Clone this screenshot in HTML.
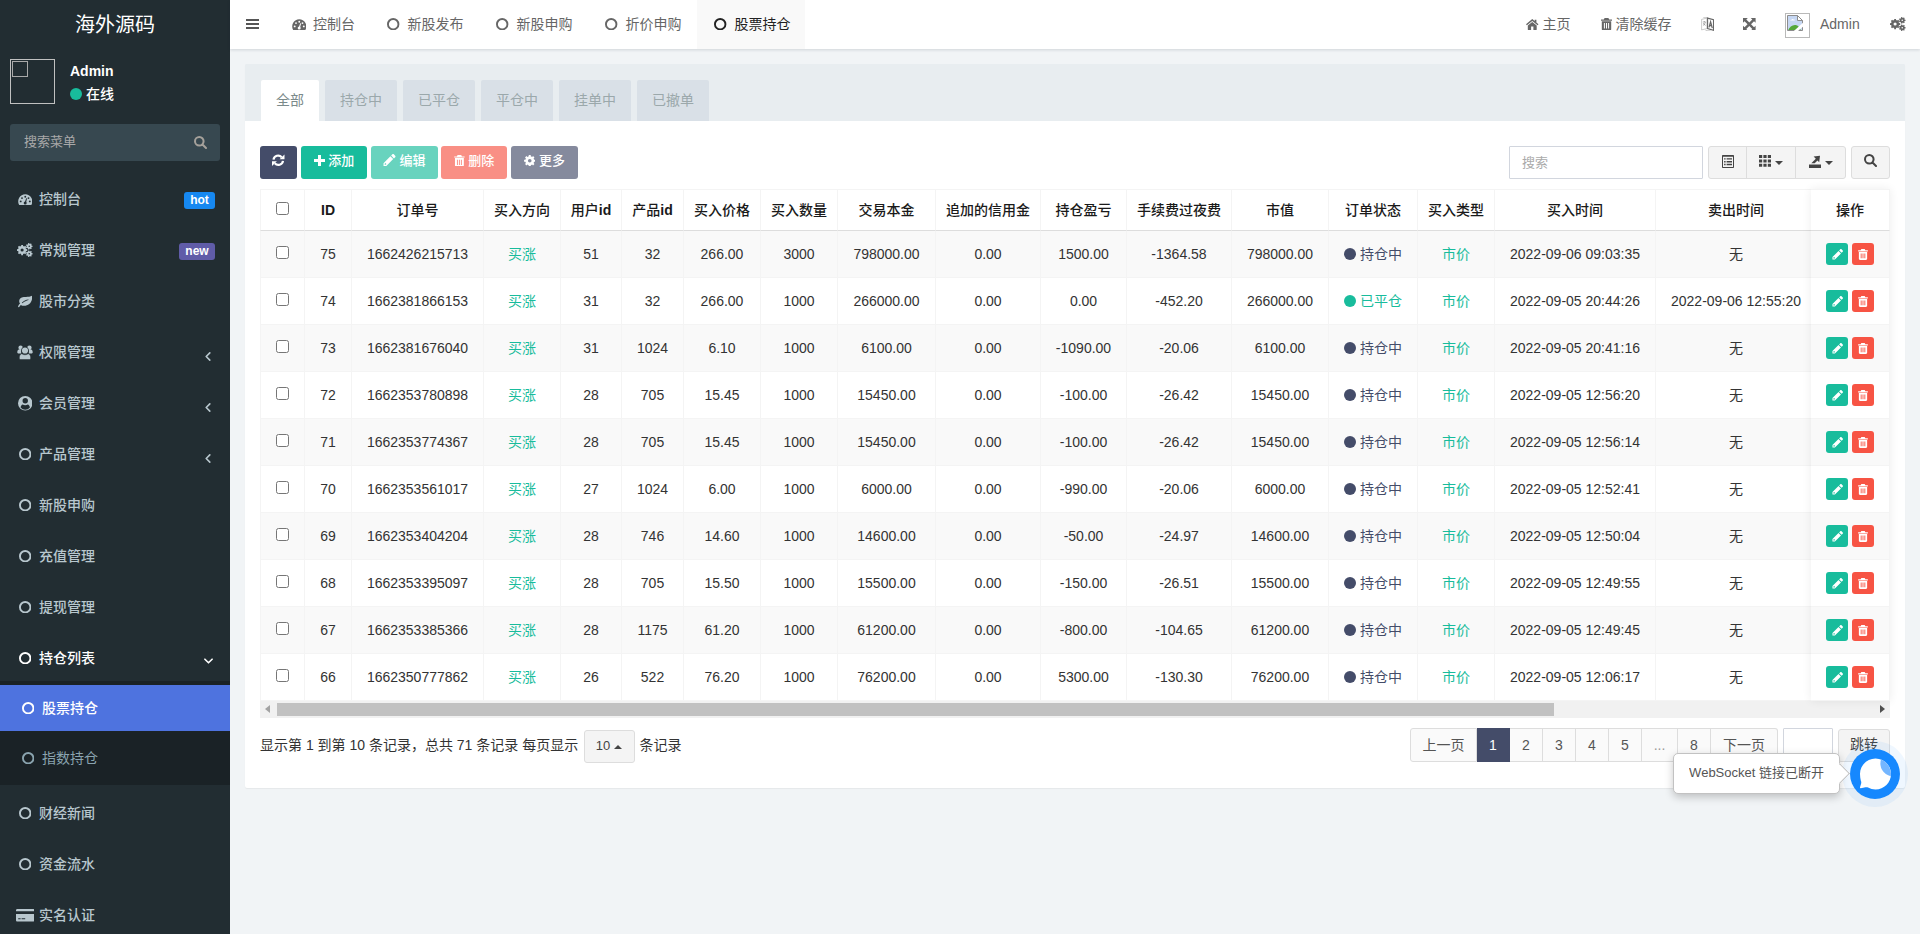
<!DOCTYPE html>
<html lang="zh-CN">
<head>
<meta charset="utf-8">
<title>海外源码</title>
<style>
*{box-sizing:border-box}
html,body{margin:0;padding:0}
html{width:1920px;height:934px;overflow:hidden;background:#f1f4f6}
body{position:relative;width:1920px;height:934px;overflow:hidden;background:#f1f4f6;color:#333;
  font-family:"Liberation Sans","Noto Sans CJK SC",sans-serif;font-size:14px;line-height:20px}
ul{list-style:none;margin:0;padding:0}
a{text-decoration:none;color:inherit}
p{margin:0}
.ic{display:inline-block;vertical-align:middle;flex:none}

/* ---------- sidebar ---------- */
.main-sidebar{position:absolute;left:0;top:0;width:230px;height:934px;background:#222d32;color:#b8c7ce;overflow:hidden}
.logo{position:absolute;left:0;top:0;width:230px;height:50px;line-height:50px;text-align:center;font-size:20px;color:#fff}
.user-panel{position:absolute;left:0;top:49px;width:230px;height:65px}
.user-panel .avatar{position:absolute;left:10px;top:10px;width:45px;height:45px;border:1px solid #c0c0c0}
.user-panel .avatar .broken{position:absolute;left:1px;top:1px;width:16px;height:16px;border:1px solid #a9a9a9}
.user-panel .info{position:absolute;left:70px;top:12px;color:#fff}
.user-panel .info p{font-weight:700;font-size:14px;line-height:20px;height:20px}
.user-panel .status{display:block;position:absolute;left:0;top:23px;font-weight:500;font-size:14px;line-height:20px;white-space:nowrap;padding-left:16px}
.user-panel .dot{position:absolute;left:0;top:4px;width:12px;height:12px;border-radius:50%;background:#18bc9c}
.sidebar-form{position:absolute;left:10px;top:124px;width:210px;height:37px;border-radius:3px;background:#374850;color:#a5abae}
.sidebar-form .ph{position:absolute;left:14px;top:0;line-height:36px;font-size:13px;color:#a9a9a9}
.sidebar-form .sbtn{position:absolute;left:183.5px;top:-1px;width:14px;height:37px;line-height:36px;color:#a5a19b}
.sidebar-menu{position:absolute;left:0;top:176px;width:230px}
.sidebar-menu>li{margin-bottom:5px}
.sidebar-menu li>a{display:block;position:relative;height:46px;line-height:46px;padding-left:15px;white-space:nowrap}
.sidebar-menu .mi{display:inline-block;width:20px;height:46px;text-align:center;vertical-align:top;line-height:44px}
.sidebar-menu .mt{display:inline-block;margin-left:4px;vertical-align:top;font-weight:500}
.sidebar-menu .label{position:absolute;right:15px;top:16px;height:17px;line-height:17px;font-size:12px;font-weight:700;color:#fff;border-radius:3px;padding:0 5px;text-align:center}
.sidebar-menu .lb-hot{background:#1688f1;width:31px;padding:0}
.sidebar-menu .lb-new{background:#605ca8;width:36px;padding:0}
.sidebar-menu .arrow{position:absolute;right:18px;top:0;height:46px;line-height:52px;width:8px;text-align:center}
.sidebar-menu .arrow.down{right:17px;width:9px;line-height:51px}
.sidebar-menu a.act{color:#fff}
.treeview-menu{background:#1a2226;padding:4px 0}
.treeview-menu>li{margin:0 0 4px}
.treeview-menu>li:last-child{margin-bottom:0}
.treeview-menu>li>a{padding-left:18px !important;color:#8aa4af}
.treeview-menu>li>a .mt{font-weight:400}
.treeview-menu>li.active>a .mt{font-weight:500}
.treeview-menu>li.active>a{background:#4e73df;color:#fff}

/* ---------- header ---------- */
.main-header{position:absolute;left:230px;top:0;width:1690px;height:49px;background:#fff;box-shadow:0 1px 3px rgba(0,21,41,.14);color:#666}
.sidebar-toggle{position:absolute;left:16px;top:19px;width:13px;height:10px;line-height:0;color:#555}
.nav-addtabs{position:absolute;left:45px;top:0;height:49px;display:flex}
.nav-addtabs li{height:49px;line-height:48px;white-space:nowrap}
.nav-addtabs li a{display:block;padding-left:14.5px;color:#666}
.nav-addtabs li:first-child a{padding-left:15px}
.nav-addtabs li.active{background:#f9f9f9}
.nav-addtabs li.active a{color:#222}
.nav-addtabs .ti{display:inline-block;width:18px;text-align:center;margin-right:5px;vertical-align:top;line-height:46px}
.nav-right li{position:absolute;top:0;height:49px;line-height:48px;white-space:nowrap;margin-left:-230px}
.nav-right li a{display:flex;align-items:center;height:48px;color:#666}
.nav-right .uimg{display:inline-block;width:25px;height:25px;border:1px solid #b9b9b9;line-height:0;padding:1px 0 0 1px;position:relative;top:1px}
.nav-right .uimg .ic{vertical-align:top}

/* ---------- content ---------- */
.content{position:absolute;left:230px;top:49px;width:1690px;height:885px}
.panel{position:absolute;left:15px;top:15px;width:1660px;height:724px;background:#fff;border-radius:2px;box-shadow:0 1px 1px rgba(0,0,0,.05)}
.panel-heading{position:absolute;left:0;top:0;width:1660px;height:57px;background:#e8edf0;border-radius:1px 1px 0 0;padding:15px 15px 0}
.nav-tabs{display:flex}
.nav-tabs li{margin-right:4px}
.nav-tabs li a{display:block;height:42px;line-height:40px;padding:0 15px;border:1px solid transparent;border-bottom:0;border-radius:3px 3px 0 0;background-color:#d9e0e7;color:#9ba8ab;background-clip:padding-box}
.nav-tabs li.active a{background-color:#fff;color:#7b8a8b}
.panel-body{position:absolute;left:0;top:57px;width:1660px;height:667px}
.btn{display:inline-flex;align-items:center;justify-content:center;height:33px;padding-bottom:4px;font-weight:500;border-radius:3px;font-size:13px;line-height:19px;color:#fff;vertical-align:top;white-space:nowrap;border:1px solid transparent}
.btn-primary{background:#444c69}
.btn-success{background:#18bc9c}
.btn-danger{background:#f75444}
.btn.disabled{opacity:.65}
.btn-default{background:#f4f4f4;border-color:#ddd;color:#444;font-weight:400;padding-bottom:3px}
.btn span{white-space:pre}
.toolbar{position:absolute;left:15px;top:25px;height:33px;display:flex}
.tools-right{position:absolute;left:0;top:25px;width:1660px;height:33px}
.tools-right .search{position:absolute;left:1264px;top:0;width:194px;height:33px;border:1px solid #d2d6de;background:#fff;border-radius:1px}
.tools-right .search .ph{position:absolute;left:12px;top:0;line-height:31px;font-size:13px;color:#aaa}
.tools-right .btn-group{position:absolute;left:1463px;top:0;display:flex}
.tools-right .btn-group .btn{border-radius:0;margin-left:-1px}
.tools-right .btn-group .btn:first-child{border-radius:3px 0 0 3px;margin-left:0}
.tools-right .btn-group .btn:last-child{border-radius:0 3px 3px 0}
.tools-right .sbtn2{position:absolute;left:1606px;top:0;padding-bottom:5px}
.caret{display:inline-block;margin-left:4px;line-height:0;font-style:normal;position:relative;top:2px}
.caret .ic{vertical-align:top}

/* table */
.tbl-wrap{position:absolute;left:15px;top:68px;width:1630px;height:529px;overflow:hidden}
.tbl{border-collapse:separate;border-spacing:0;table-layout:fixed;width:1556px;font-size:14px}
.tbl th,.tbl td{height:47px;padding:0;text-align:center;vertical-align:middle;white-space:nowrap;border-left:1px solid #f4f4f4;border-bottom:1px solid #f4f4f4;overflow:hidden}
.tbl th{height:42px;font-weight:500;color:#1a1a1a;border-top:1px solid #f4f4f4;border-bottom:1px solid #ddd;background:#fff}
.tbl tbody tr:nth-child(odd) td{background:#f9f9f9}
.tbl tbody tr:nth-child(even) td{background:#fff}
.tbl .g{color:#18bc9c}
.tbl .st{color:#444c69}
.tbl .st i{display:inline-block;width:12px;height:12px;border-radius:50%;background:#444c69;margin-right:4px;vertical-align:-1px}
.tbl .st-ok{color:#18bc9c}
.tbl .st-ok i{background:#18bc9c}
.cb{display:inline-block;width:13px;height:13px;border:1px solid #767676;border-radius:2.5px;background:#fff;vertical-align:middle;position:relative;top:-3px}
.fixed-col{position:absolute;left:1566px;top:68px;width:79px;height:512px;background:#fff;box-shadow:0 0 9px rgba(0,0,0,.075)}
.fixed-col .tbl{width:79px}
.fixed-col .tbl th,.fixed-col .tbl td{border-left:0;border-right:1px solid #f4f4f4}
.ab{display:inline-flex;align-items:center;justify-content:center;width:22px;height:22px;border-radius:3px;color:#fff;vertical-align:middle;margin:0 2px}
.ab-e{background:#18bc9c}
.ab-d{background:#f75444}
.hscroll{position:absolute;left:0;top:512px;width:1630px;height:17px;background:#f1f1f1}
.hscroll .thumb{position:absolute;left:17px;top:2px;width:1277px;height:13px;background:#c1c1c1}
.hscroll .al{position:absolute;left:5px;top:4px;width:0;height:0;border:4.500px solid transparent;border-left:0;border-right:5px solid #a3a3a3}
.hscroll .ar{position:absolute;left:1620px;top:4px;width:0;height:0;border:4.500px solid transparent;border-right:0;border-left:5px solid #505050}

/* pagination */
.pg-left{position:absolute;left:15px;top:607px;height:34px;line-height:34px;white-space:nowrap;font-size:14px;color:#333}
.pg-left .psize{width:51px;margin:0 1px 0 1.5px;vertical-align:top;position:relative;top:2px}
.pg-right{position:absolute;left:0;top:607px;width:1660px;height:34px}
.pagination{position:absolute;left:1165px;top:0;display:flex;height:34px}
.pagination li{height:34px;margin-left:0}
.pagination li a{display:block;height:34px;line-height:32px;text-align:center;border:1px solid #ddd;border-left-width:0;background:#fafafa;color:#555;font-size:14px}
.pagination li:first-child a{border-left-width:1px;border-radius:3px 0 0 3px}
.pagination li:last-child a{border-radius:0 3px 3px 0}
.pagination li.active a{background:#444c69;border-color:#444c69;color:#fff}
.jump-in{position:absolute;left:1538px;top:0;width:50px;height:34px;border:1px solid #d2d6de;background:#fff;border-radius:1px}
.jump-btn{position:absolute;left:1593px;top:1px;width:52px;color:#444;font-size:14px}

/* chat */
.ws-tip{position:absolute;left:1673px;top:753px;width:167px;height:41px;background:#fff;border:1px solid #c2c2c2;border-radius:5px;box-shadow:0 3px 8px rgba(0,0,0,.22);font-size:12px;line-height:37px;color:#555;text-align:center;white-space:nowrap;z-index:7}
.ws-tip span{font-size:14px;display:inline-block;transform:scale(.93);transform-origin:50% 50%}
.ws-tip .tri{position:absolute;left:157.5px;top:11.5px;width:15px;height:15px;background:#fff;border:1px solid #b4b4b4;border-left-color:transparent;border-bottom-color:transparent;transform:rotate(45deg);clip-path:polygon(0 0,100% 0,100% 100%,calc(100% - 2.4px) 100%,0 2.4px)}
.chat-btn{position:absolute;left:1850px;top:749px;width:50px;height:50px;border-radius:50%;box-shadow:0 0 0 8px rgba(25,137,250,.07);z-index:6;line-height:0}
.tbl th b{font-weight:700}
.pagination li.dots a{color:#999}
</style>
</head>
<body>
<aside class="main-sidebar">
<a class="logo">海外源码</a>
<div class="user-panel"><div class="avatar"><span class="broken"></span></div><div class="info"><p>Admin</p><span class="status"><i class="dot"></i>在线</span></div></div>
<div class="sidebar-form"><span class="ph">搜索菜单</span><span class="sbtn"><svg class="ic " width="13" height="13" viewBox="0 0 13 13" style="" aria-hidden="true"><path fill="none" stroke="currentColor" stroke-width="2" stroke-linecap="round" d="M9.600 5.300a4.300 4.300 0 1 1-8.600 0a4.300 4.300 0 0 1 8.600 0zM8.500 8.500L12 12"/></svg></span></div>
<ul class="sidebar-menu">
<li><a><span class="mi"><svg class="ic " width="14.5" height="11.5" viewBox="0 0 14.5 11.5" style="" aria-hidden="true"><path fill="currentColor" d="M7.250 .2a7.200 7.200 0 0 1 6.200 10.600a.9.900 0 0 1-.8.500H1.850a.9.900 0 0 1-.8-.5A7.200 7.200 0 0 1 7.250 .2z"/><g fill="#222d32"><circle cx="2.700" cy="7.400" r=".95"/><circle cx="4" cy="4.100" r=".95"/><circle cx="7.250" cy="2.700" r=".95"/><circle cx="10.500" cy="4.100" r=".95"/><circle cx="11.800" cy="7.400" r=".95"/><circle cx="7.200" cy="8.900" r="1.500"/><path d="M8.200 4.300l.9.300-1.100 4.200l-1.300-.4z"/></g></svg></span><span class="mt">控制台</span><small class="label lb-hot">hot</small></a></li>
<li><a><span class="mi"><svg class="ic " width="15.7" height="14.2" viewBox="0 0 16 14.5" style="" aria-hidden="true"><path fill="currentColor" fill-rule="evenodd" d="M10.42 6.29L10.42 8.11L9.28 8.18L8.78 9.39L9.54 10.25L8.25 11.54L7.39 10.78L6.18 11.28L6.11 12.42L4.29 12.42L4.22 11.28L3.01 10.78L2.15 11.54L0.86 10.25L1.62 9.39L1.12 8.18L-0.02 8.11L-0.02 6.29L1.12 6.22L1.62 5.01L0.86 4.15L2.15 2.86L3.01 3.62L4.22 3.12L4.29 1.98L6.11 1.98L6.18 3.12L7.39 3.62L8.25 2.86L9.54 4.15L8.78 5.01L9.28 6.22ZM3.60 7.20a1.60 1.60 0 1 0 3.20 0a1.60 1.60 0 1 0 -3.20 0ZM15.83 2.73L15.83 4.07L15.01 4.09L14.60 4.93L15.10 5.59L14.06 6.42L13.52 5.79L12.62 6.00L12.41 6.80L11.11 6.50L11.27 5.69L10.54 5.11L9.79 5.45L9.21 4.25L9.94 3.86L9.94 2.94L9.21 2.55L9.79 1.35L10.54 1.69L11.27 1.11L11.11 0.30L12.41 0.00L12.62 0.80L13.52 1.01L14.06 0.38L15.10 1.21L14.60 1.87L15.01 2.71ZM11.70 3.40a0.80 0.80 0 1 0 1.60 0a0.80 0.80 0 1 0 -1.60 0ZM15.83 10.33L15.83 11.67L15.01 11.69L14.60 12.53L15.10 13.19L14.06 14.02L13.52 13.39L12.62 13.60L12.41 14.40L11.11 14.10L11.27 13.29L10.54 12.71L9.79 13.05L9.21 11.85L9.94 11.46L9.94 10.54L9.21 10.15L9.79 8.95L10.54 9.29L11.27 8.71L11.11 7.90L12.41 7.60L12.62 8.40L13.52 8.61L14.06 7.98L15.10 8.81L14.60 9.47L15.01 10.31ZM11.70 11.00a0.80 0.80 0 1 0 1.60 0a0.80 0.80 0 1 0 -1.60 0Z"/></svg></span><span class="mt">常规管理</span><small class="label lb-new">new</small></a></li>
<li><a><span class="mi"><svg class="ic " width="14.5" height="12.5" viewBox="0 0 14.5 12.5" style="" aria-hidden="true"><path fill="currentColor" fill-rule="evenodd" d="M14.300 .6c.2 6.600-3.100 10.200-8.200 10.200c-1.300 0-2.400-.3-3.300-.9C2.200 10.600 1.700 11.400 1.200 12C.8 12.500-.2 12 .1 11.300C.5 10.400 1.200 9.400 2 8.600C1.300 7.600 1 6.400 1.300 5.200C2 2.300 5 1.900 8 1.900c2.500 0 4.700-.2 6.300-1.300zM10.400 4.500C8 4.700 5.600 5.800 3.800 7.700L4.400 8.300c2.100-1.600 4-2.600 6.200-3.200z"/></svg></span><span class="mt">股市分类</span></a></li>
<li><a><span class="mi"><svg class="ic " width="16" height="15" viewBox="0 0 16 15" style="" aria-hidden="true"><g fill="currentColor"><circle cx="3.6" cy="2.700" r="2.200"/><circle cx="12.400" cy="2.700" r="2.200"/><path d="M.3 7.300C.3 5.600 1 4.600 2 4.500h2.200v4H1.200C.6 8.500.3 8 .3 7.300zM15.700 7.300c0-1.700-.7-2.700-1.700-2.800h-2.200v4h3c.6 0 .9-.5.9-1.200z"/><circle cx="8" cy="5.500" r="3.700" fill="#222d32"/><circle cx="8" cy="5.500" r="3.100"/><path stroke="#222d32" stroke-width=".5" d="M4 14.600c-1.100 0-1.700-.7-1.700-1.700c0-2.200 1-4 2.500-4.200c.9.700 2 1.100 3.200 1.100s2.300-.4 3.200-1.100c1.500.2 2.500 2 2.500 4.200c0 1-.6 1.700-1.700 1.700z"/></g></svg></span><span class="mt">权限管理</span><span class="arrow"><svg class="ic " width="6" height="9" viewBox="0 0 6 9" style="" aria-hidden="true"><path fill="none" stroke="currentColor" stroke-width="1.6" stroke-linecap="round" stroke-linejoin="round" d="M4.800 .9L1.200 4.500L4.800 8.100"/></svg></span></a></li>
<li><a><span class="mi"><svg class="ic " width="14.5" height="14.5" viewBox="0 0 14.5 14.5" style="" aria-hidden="true"><path fill="currentColor" fill-rule="evenodd" d="M7.250 0a7.250 7.250 0 1 1 0 14.500a7.250 7.250 0 0 1 0-14.500zM7.250 2.100a2.700 2.700 0 1 0 0 5.400a2.700 2.700 0 0 0 0-5.400zM2.600 11.400a5.900 5.900 0 0 0 9.300 0c-.3-1.500-1-2.600-2.200-2.900c-.7.500-1.500.8-2.450.8s-1.750-.3-2.450-.8c-1.200.3-1.900 1.400-2.200 2.900z"/></svg></span><span class="mt">会员管理</span><span class="arrow"><svg class="ic " width="6" height="9" viewBox="0 0 6 9" style="" aria-hidden="true"><path fill="none" stroke="currentColor" stroke-width="1.6" stroke-linecap="round" stroke-linejoin="round" d="M4.800 .9L1.200 4.500L4.800 8.100"/></svg></span></a></li>
<li><a><span class="mi"><svg class="ic " width="12.4" height="12.4" viewBox="0 0 12.4 12.4" style="" aria-hidden="true"><circle cx="6.2" cy="6.2" r="5.25" fill="none" stroke="currentColor" stroke-width="1.9"/></svg></span><span class="mt">产品管理</span><span class="arrow"><svg class="ic " width="6" height="9" viewBox="0 0 6 9" style="" aria-hidden="true"><path fill="none" stroke="currentColor" stroke-width="1.6" stroke-linecap="round" stroke-linejoin="round" d="M4.800 .9L1.200 4.500L4.800 8.100"/></svg></span></a></li>
<li><a><span class="mi"><svg class="ic " width="12.4" height="12.4" viewBox="0 0 12.4 12.4" style="" aria-hidden="true"><circle cx="6.2" cy="6.2" r="5.25" fill="none" stroke="currentColor" stroke-width="1.9"/></svg></span><span class="mt">新股申购</span></a></li>
<li><a><span class="mi"><svg class="ic " width="12.4" height="12.4" viewBox="0 0 12.4 12.4" style="" aria-hidden="true"><circle cx="6.2" cy="6.2" r="5.25" fill="none" stroke="currentColor" stroke-width="1.9"/></svg></span><span class="mt">充值管理</span></a></li>
<li><a><span class="mi"><svg class="ic " width="12.4" height="12.4" viewBox="0 0 12.4 12.4" style="" aria-hidden="true"><circle cx="6.2" cy="6.2" r="5.25" fill="none" stroke="currentColor" stroke-width="1.9"/></svg></span><span class="mt">提现管理</span></a></li>
<li class="open"><a class="act"><span class="mi"><svg class="ic " width="12.4" height="12.4" viewBox="0 0 12.4 12.4" style="" aria-hidden="true"><circle cx="6.2" cy="6.2" r="5.25" fill="none" stroke="currentColor" stroke-width="1.9"/></svg></span><span class="mt">持仓列表</span><span class="arrow down"><svg class="ic " width="9" height="6" viewBox="0 0 9 6" style="" aria-hidden="true"><path fill="none" stroke="currentColor" stroke-width="1.6" stroke-linecap="round" stroke-linejoin="round" d="M.9 1.200L4.500 4.800L8.100 1.200"/></svg></span></a>
<ul class="treeview-menu"><li class="active"><a><span class="mi"><svg class="ic " width="12.4" height="12.4" viewBox="0 0 12.4 12.4" style="" aria-hidden="true"><circle cx="6.2" cy="6.2" r="5.25" fill="none" stroke="currentColor" stroke-width="1.9"/></svg></span><span class="mt">股票持仓</span></a></li><li><a><span class="mi"><svg class="ic " width="12.4" height="12.4" viewBox="0 0 12.4 12.4" style="" aria-hidden="true"><circle cx="6.2" cy="6.2" r="5.25" fill="none" stroke="currentColor" stroke-width="1.9"/></svg></span><span class="mt">指数持仓</span></a></li></ul></li>
<li><a><span class="mi"><svg class="ic " width="12.4" height="12.4" viewBox="0 0 12.4 12.4" style="" aria-hidden="true"><circle cx="6.2" cy="6.2" r="5.25" fill="none" stroke="currentColor" stroke-width="1.9"/></svg></span><span class="mt">财经新闻</span></a></li>
<li><a><span class="mi"><svg class="ic " width="12.4" height="12.4" viewBox="0 0 12.4 12.4" style="" aria-hidden="true"><circle cx="6.2" cy="6.2" r="5.25" fill="none" stroke="currentColor" stroke-width="1.9"/></svg></span><span class="mt">资金流水</span></a></li>
<li><a><span class="mi"><svg class="ic " width="18.5" height="12.5" viewBox="0 0 18.5 12.5" style="margin-left:-0.3px" aria-hidden="true"><path fill="currentColor" fill-rule="evenodd" d="M1.300 0h15.900c.7 0 1.300.6 1.300 1.300v1H0v-1C0 .6.600 0 1.300 0zM0 5h18.500v6.200c0 .7-.6 1.300-1.300 1.300H1.300C.6 12.500 0 11.900 0 11.200zM2.200 9.300v1h2.400v-1zM5.600 9.300v1h3.600v-1z"/></svg></span><span class="mt">实名认证</span></a></li>
</ul>
</aside>
<header class="main-header">
<a class="sidebar-toggle"><svg class="ic " width="13" height="10" viewBox="0 0 13 10" style="" aria-hidden="true"><path fill="currentColor" d="M0 0h13v2H0zM0 4h13v2H0zM0 8h13v2H0z"/></svg></a>
<ul class="nav-addtabs">
<li class="" style="width:95px"><a><span class="ti"><svg class="ic " width="14.5" height="11.5" viewBox="0 0 14.5 11.5" style="" aria-hidden="true"><path fill="currentColor" d="M7.250 .2a7.200 7.200 0 0 1 6.200 10.600a.9.900 0 0 1-.8.500H1.850a.9.900 0 0 1-.8-.5A7.200 7.200 0 0 1 7.250 .2z"/><g fill="#fff"><circle cx="2.700" cy="7.400" r=".95"/><circle cx="4" cy="4.100" r=".95"/><circle cx="7.250" cy="2.700" r=".95"/><circle cx="10.500" cy="4.100" r=".95"/><circle cx="11.800" cy="7.400" r=".95"/><circle cx="7.200" cy="8.900" r="1.500"/><path d="M8.200 4.300l.9.300-1.100 4.200l-1.300-.4z"/></g></svg></span><span>控制台</span></a></li>
<li class="" style="width:109px"><a><span class="ti"><svg class="ic " width="12.4" height="12.4" viewBox="0 0 12.4 12.4" style="" aria-hidden="true"><circle cx="6.2" cy="6.2" r="5.25" fill="none" stroke="currentColor" stroke-width="1.9"/></svg></span><span>新股发布</span></a></li>
<li class="" style="width:109px"><a><span class="ti"><svg class="ic " width="12.4" height="12.4" viewBox="0 0 12.4 12.4" style="" aria-hidden="true"><circle cx="6.2" cy="6.2" r="5.25" fill="none" stroke="currentColor" stroke-width="1.9"/></svg></span><span>新股申购</span></a></li>
<li class="" style="width:109px"><a><span class="ti"><svg class="ic " width="12.4" height="12.4" viewBox="0 0 12.4 12.4" style="" aria-hidden="true"><circle cx="6.2" cy="6.2" r="5.25" fill="none" stroke="currentColor" stroke-width="1.9"/></svg></span><span>折价申购</span></a></li>
<li class="active" style="width:108px"><a><span class="ti"><svg class="ic " width="12.4" height="12.4" viewBox="0 0 12.4 12.4" style="" aria-hidden="true"><circle cx="6.2" cy="6.2" r="5.25" fill="none" stroke="currentColor" stroke-width="1.9"/></svg></span><span>股票持仓</span></a></li>
</ul>
<ul class="nav-right">
<li style="left:1526px"><a><svg class="ic " width="12.5" height="11" viewBox="0 0 12.5 11" style="" aria-hidden="true"><path fill="currentColor" d="M6.250 0L0 5.200l.9 1.100L6.250 1.900l5.350 4.400l.9-1.100L10.400 3.400V.7H8.700v1.300zM6.250 2.900L1.800 6.600V10.400c0 .3.300.6.600.6H5.100V7.500h2.300V11h2.700c.3 0 .6-.3.600-.6V6.600z"/></svg><span class="t" style="margin-left:4px">主页</span></a></li>
<li style="left:1600.500px"><a><svg class="ic " width="11" height="12.5" viewBox="0 0 11 12.5" style="" aria-hidden="true"><path fill="currentColor" fill-rule="evenodd" d="M3.600 0h3.800l.8 1.500H11v1.200H0V1.500h2.800zM.8 3.300h9.400v7.900c0 .7-.6 1.300-1.300 1.300H2.100c-.7 0-1.300-.6-1.300-1.300zM2.900 5v5.600h1V5zM5 5v5.600h1V5zM7.100 5v5.600h1V5z"/></svg><span class="t" style="margin-left:4px">清除缓存</span></a></li>
<li style="left:1701px"><a><svg class="ic " width="13" height="14" viewBox="0 0 13 14" style="" aria-hidden="true"><path fill="none" stroke="currentColor" stroke-opacity=".38" stroke-width=".9" d="M.6 2.400L5.900 1.100v10.500L.6 12.900z"/><path fill="none" stroke="currentColor" stroke-opacity=".55" stroke-width=".9" d="M1.800 5h3M3.300 4v1M2 8.500c1.200-.6 2-1.700 2.300-3.400M2.300 6c.4 1.100 1.200 1.900 2.300 2.400"/><path fill="none" stroke="currentColor" stroke-width="1.100" d="M6.600 1.100l5.900 1.600v10.600l-5.900-1.700z"/><path fill="none" stroke="currentColor" stroke-width="1.200" d="M8 10.400l1.600-5.600l1.700 6.300M8.600 8.400l2.200.6"/><path fill="none" stroke="currentColor" stroke-opacity=".5" stroke-width=".8" d="M2.500 .5c1.500-.4 3-.4 4.500.3M9.500 13.700c-1.500.4-3.500.3-5-.5"/></svg></a></li>
<li style="left:1743px"><a><svg class="ic " width="12.6" height="12.6" viewBox="0 0 13 13" style="" aria-hidden="true"><path fill="currentColor" d="M0 0h5L3.400 1.600L6.500 4.700L9.600 1.600L8 0h5v5L11.400 3.400L8.300 6.500L11.400 9.600L13 8v5H8l1.600-1.600L6.500 8.300L3.400 11.400L5 13H0V8l1.600 1.600L4.700 6.500L1.600 3.400L0 5z"/></svg></a></li>
<li style="left:1785px"><a><span class="uimg"><svg class="ic " width="16" height="16" viewBox="0 0 16 16" style="" aria-hidden="true"><path fill="#c6d7f3" d="M.5 .5h10l5 5v10H.5z"/><path fill="#fff" d="M3 5.600c0-.7.900-.8 1.300-.5c.2-1.100 1.700-1.500 2.400-.5c.8-.2 1.300.4 1.100 1z" opacity=".95"/><path fill="#55a83a" d="M1 15.500c1.500-4 5-6.300 8.500-5.300c1.500.5 3 1.800 4.500 5.300z"/><path fill="none" stroke="#8c8c8c" stroke-width="1" d="M.5 .5h10l5 5v10H.5z"/><path fill="#fff" stroke="#8c8c8c" stroke-width="1" d="M10.500 .5v5h5z"/><path fill="#fff" d="M6.300 16.500L16.500 7.400v3.800L10.400 16.500z"/></svg></span><span class="t" style="margin-left:10px">Admin</span></a></li>
<li style="left:1890px"><a><svg class="ic " width="15.7" height="14.2" viewBox="0 0 16 14.5" style="" aria-hidden="true"><path fill="currentColor" fill-rule="evenodd" d="M10.42 6.29L10.42 8.11L9.28 8.18L8.78 9.39L9.54 10.25L8.25 11.54L7.39 10.78L6.18 11.28L6.11 12.42L4.29 12.42L4.22 11.28L3.01 10.78L2.15 11.54L0.86 10.25L1.62 9.39L1.12 8.18L-0.02 8.11L-0.02 6.29L1.12 6.22L1.62 5.01L0.86 4.15L2.15 2.86L3.01 3.62L4.22 3.12L4.29 1.98L6.11 1.98L6.18 3.12L7.39 3.62L8.25 2.86L9.54 4.15L8.78 5.01L9.28 6.22ZM3.60 7.20a1.60 1.60 0 1 0 3.20 0a1.60 1.60 0 1 0 -3.20 0ZM15.83 2.73L15.83 4.07L15.01 4.09L14.60 4.93L15.10 5.59L14.06 6.42L13.52 5.79L12.62 6.00L12.41 6.80L11.11 6.50L11.27 5.69L10.54 5.11L9.79 5.45L9.21 4.25L9.94 3.86L9.94 2.94L9.21 2.55L9.79 1.35L10.54 1.69L11.27 1.11L11.11 0.30L12.41 0.00L12.62 0.80L13.52 1.01L14.06 0.38L15.10 1.21L14.60 1.87L15.01 2.71ZM11.70 3.40a0.80 0.80 0 1 0 1.60 0a0.80 0.80 0 1 0 -1.60 0ZM15.83 10.33L15.83 11.67L15.01 11.69L14.60 12.53L15.10 13.19L14.06 14.02L13.52 13.39L12.62 13.60L12.41 14.40L11.11 14.10L11.27 13.29L10.54 12.71L9.79 13.05L9.21 11.85L9.94 11.46L9.94 10.54L9.21 10.15L9.79 8.95L10.54 9.29L11.27 8.71L11.11 7.90L12.41 7.60L12.62 8.40L13.52 8.61L14.06 7.98L15.10 8.81L14.60 9.47L15.01 10.31ZM11.70 11.00a0.80 0.80 0 1 0 1.60 0a0.80 0.80 0 1 0 -1.60 0Z"/></svg></a></li>
</ul>
</header>
<section class="content">
<div class="panel">
<div class="panel-heading"><ul class="nav-tabs"><li class="active"><a>全部</a></li><li class=""><a>持仓中</a></li><li class=""><a>已平仓</a></li><li class=""><a>平仓中</a></li><li class=""><a>挂单中</a></li><li class=""><a>已撤单</a></li></ul></div>
<div class="panel-body">
<div class="toolbar"><a class="btn btn-primary" style="width:37px"><svg class="ic " width="12.5" height="12.5" viewBox="0 0 12.5 12.5" style="" aria-hidden="true"><path fill="none" stroke="currentColor" stroke-width="2.200" d="M1.500 5.600A4.700 4.700 0 0 1 9.700 3.200M11 6.900A4.700 4.700 0 0 1 2.800 9.300"/><path fill="currentColor" d="M12.500 .4v4.900H7.600zM0 12.100V7.200h4.900z"/></svg></a><a class="btn btn-success" style="width:66px;margin-left:4px"><svg class="ic " width="11" height="11" viewBox="0 0 11 11" style="" aria-hidden="true"><path fill="currentColor" d="M4 0h3v4h4v3H7v4H4V7H0V4h4z"/></svg><span> 添加</span></a><a class="btn btn-success disabled" style="width:67px;margin-left:4px"><svg class="ic " width="12.5" height="12.5" viewBox="0 0 12 12" style="" aria-hidden="true"><path fill="currentColor" fill-rule="evenodd" d="M9 .3c.4-.4 1-.4 1.400 0l1.300 1.300c.4.4.4 1 0 1.400L10.500 4.200L7.800 1.500zM7.100 2.200l2.700 2.700L3.200 11.500H.5V8.800zM1.600 9.400v1h1l.7-.7L2.300 8.700z"/></svg><span> 编辑</span></a><a class="btn btn-danger disabled" style="width:66px;margin-left:3px"><svg class="ic " width="10.8" height="11.8" viewBox="0 0 11 12.5" style="" aria-hidden="true"><path fill="currentColor" fill-rule="evenodd" d="M3.600 0h3.800l.8 1.500H11v1.200H0V1.500h2.800zM.8 3.300h9.400v7.900c0 .7-.6 1.300-1.300 1.300H2.100c-.7 0-1.300-.6-1.300-1.300zM2.900 5v5.600h1V5zM5 5v5.600h1V5zM7.100 5v5.600h1V5z"/></svg><span> 删除</span></a><a class="btn btn-primary disabled" style="width:67px;margin-left:4px"><svg class="ic " width="11.5" height="11.5" viewBox="0 0 12 12" style="" aria-hidden="true"><path fill="currentColor" fill-rule="evenodd" d="M11.91 4.97L11.91 7.03L10.57 7.10L10.01 8.46L10.91 9.45L9.45 10.91L8.46 10.01L7.10 10.57L7.03 11.91L4.97 11.91L4.90 10.57L3.54 10.01L2.55 10.91L1.09 9.45L1.99 8.46L1.43 7.10L0.09 7.03L0.09 4.97L1.43 4.90L1.99 3.54L1.09 2.55L2.55 1.09L3.54 1.99L4.90 1.43L4.97 0.09L7.03 0.09L7.10 1.43L8.46 1.99L9.45 1.09L10.91 2.55L10.01 3.54L10.57 4.90ZM4.10 6.00a1.90 1.90 0 1 0 3.80 0a1.90 1.90 0 1 0 -3.80 0Z"/></svg><span> 更多</span></a></div>
<div class="tools-right"><div class="search"><span class="ph">搜索</span></div><div class="btn-group"><a class="btn btn-default" style="width:39px"><svg class="ic " width="12" height="13" viewBox="0 0 12 13" style="" aria-hidden="true"><path fill="currentColor" fill-rule="evenodd" d="M1 0h10c.6 0 1 .4 1 1v11c0 .6-.4 1-1 1H1c-.6 0-1-.4-1-1V1C0 .4.4 0 1 0zM1 1.800v10.200h10V1.800zM2.100 3.200h1.500v1.400H2.100zM4.600 3.200h5.400v1.400H4.600zM2.100 6h1.500v1.400H2.100zM4.600 6h5.400v1.400H4.600zM2.100 8.800h1.500v1.400H2.100zM4.600 8.800h5.400v1.400H4.600z"/></svg></a><a class="btn btn-default" style="width:50px"><svg class="ic " width="12" height="11.8" viewBox="0 0 12 11.8" style="" aria-hidden="true"><path fill="currentColor" d="M0.0 0.0h3.200v3h-3.200zM4.4 0.0h3.200v3h-3.200zM8.8 0.0h3.200v3h-3.200zM0.0 4.4h3.200v3h-3.200zM4.4 4.4h3.200v3h-3.200zM8.8 4.4h3.200v3h-3.200zM0.0 8.8h3.200v3h-3.200zM4.4 8.8h3.200v3h-3.200zM8.8 8.8h3.200v3h-3.200z"/></svg><i class="caret"><svg class="ic " width="8" height="4" viewBox="0 0 8 4" style="" aria-hidden="true"><path fill="currentColor" d="M0 0h8L4 4z"/></svg></i></a><a class="btn btn-default" style="width:51px"><svg class="ic " width="12" height="13" viewBox="0 0 12 13" style="" aria-hidden="true"><path fill="currentColor" d="M0 9.600h12v3.400H0zM2.300 8.300L6.800 3.800L4.600 1.600L11 .8L10.200 7.200L8.500 5.500L5.700 8.300z"/></svg><i class="caret"><svg class="ic " width="8" height="4" viewBox="0 0 8 4" style="" aria-hidden="true"><path fill="currentColor" d="M0 0h8L4 4z"/></svg></i></a></div><a class="btn btn-default sbtn2" style="width:39px"><svg class="ic " width="13" height="13" viewBox="0 0 13 13" style="" aria-hidden="true"><path fill="none" stroke="currentColor" stroke-width="2" stroke-linecap="round" d="M9.600 5.300a4.300 4.300 0 1 1-8.600 0a4.300 4.300 0 0 1 8.600 0zM8.500 8.500L12 12"/></svg></a></div>
<div class="tbl-wrap">
<table class="tbl">
<colgroup><col style="width:44px"><col style="width:47px"><col style="width:132px"><col style="width:77px"><col style="width:61px"><col style="width:62px"><col style="width:77px"><col style="width:77px"><col style="width:98px"><col style="width:105px"><col style="width:86px"><col style="width:105px"><col style="width:97px"><col style="width:89px"><col style="width:77px"><col style="width:161px"><col style="width:161px"></colgroup>
<thead><tr><th><span class="cb"></span></th><th><b>ID</b></th><th>订单号</th><th>买入方向</th><th>用户<b>id</b></th><th>产品<b>id</b></th><th>买入价格</th><th>买入数量</th><th>交易本金</th><th>追加的信用金</th><th>持仓盈亏</th><th>手续费过夜费</th><th>市值</th><th>订单状态</th><th>买入类型</th><th>买入时间</th><th>卖出时间</th></tr></thead>
<tbody>
<tr><td><span class="cb"></span></td><td>75</td><td>1662426215713</td><td><span class="g">买涨</span></td><td>51</td><td>32</td><td>266.00</td><td>3000</td><td>798000.00</td><td>0.00</td><td>1500.00</td><td>-1364.58</td><td>798000.00</td><td><span class="st"><i></i>持仓中</span></td><td><span class="g">市价</span></td><td>2022-09-06 09:03:35</td><td>无</td></tr>
<tr><td><span class="cb"></span></td><td>74</td><td>1662381866153</td><td><span class="g">买涨</span></td><td>31</td><td>32</td><td>266.00</td><td>1000</td><td>266000.00</td><td>0.00</td><td>0.00</td><td>-452.20</td><td>266000.00</td><td><span class="st st-ok"><i></i>已平仓</span></td><td><span class="g">市价</span></td><td>2022-09-05 20:44:26</td><td>2022-09-06 12:55:20</td></tr>
<tr><td><span class="cb"></span></td><td>73</td><td>1662381676040</td><td><span class="g">买涨</span></td><td>31</td><td>1024</td><td>6.10</td><td>1000</td><td>6100.00</td><td>0.00</td><td>-1090.00</td><td>-20.06</td><td>6100.00</td><td><span class="st"><i></i>持仓中</span></td><td><span class="g">市价</span></td><td>2022-09-05 20:41:16</td><td>无</td></tr>
<tr><td><span class="cb"></span></td><td>72</td><td>1662353780898</td><td><span class="g">买涨</span></td><td>28</td><td>705</td><td>15.45</td><td>1000</td><td>15450.00</td><td>0.00</td><td>-100.00</td><td>-26.42</td><td>15450.00</td><td><span class="st"><i></i>持仓中</span></td><td><span class="g">市价</span></td><td>2022-09-05 12:56:20</td><td>无</td></tr>
<tr><td><span class="cb"></span></td><td>71</td><td>1662353774367</td><td><span class="g">买涨</span></td><td>28</td><td>705</td><td>15.45</td><td>1000</td><td>15450.00</td><td>0.00</td><td>-100.00</td><td>-26.42</td><td>15450.00</td><td><span class="st"><i></i>持仓中</span></td><td><span class="g">市价</span></td><td>2022-09-05 12:56:14</td><td>无</td></tr>
<tr><td><span class="cb"></span></td><td>70</td><td>1662353561017</td><td><span class="g">买涨</span></td><td>27</td><td>1024</td><td>6.00</td><td>1000</td><td>6000.00</td><td>0.00</td><td>-990.00</td><td>-20.06</td><td>6000.00</td><td><span class="st"><i></i>持仓中</span></td><td><span class="g">市价</span></td><td>2022-09-05 12:52:41</td><td>无</td></tr>
<tr><td><span class="cb"></span></td><td>69</td><td>1662353404204</td><td><span class="g">买涨</span></td><td>28</td><td>746</td><td>14.60</td><td>1000</td><td>14600.00</td><td>0.00</td><td>-50.00</td><td>-24.97</td><td>14600.00</td><td><span class="st"><i></i>持仓中</span></td><td><span class="g">市价</span></td><td>2022-09-05 12:50:04</td><td>无</td></tr>
<tr><td><span class="cb"></span></td><td>68</td><td>1662353395097</td><td><span class="g">买涨</span></td><td>28</td><td>705</td><td>15.50</td><td>1000</td><td>15500.00</td><td>0.00</td><td>-150.00</td><td>-26.51</td><td>15500.00</td><td><span class="st"><i></i>持仓中</span></td><td><span class="g">市价</span></td><td>2022-09-05 12:49:55</td><td>无</td></tr>
<tr><td><span class="cb"></span></td><td>67</td><td>1662353385366</td><td><span class="g">买涨</span></td><td>28</td><td>1175</td><td>61.20</td><td>1000</td><td>61200.00</td><td>0.00</td><td>-800.00</td><td>-104.65</td><td>61200.00</td><td><span class="st"><i></i>持仓中</span></td><td><span class="g">市价</span></td><td>2022-09-05 12:49:45</td><td>无</td></tr>
<tr><td><span class="cb"></span></td><td>66</td><td>1662350777862</td><td><span class="g">买涨</span></td><td>26</td><td>522</td><td>76.20</td><td>1000</td><td>76200.00</td><td>0.00</td><td>5300.00</td><td>-130.30</td><td>76200.00</td><td><span class="st"><i></i>持仓中</span></td><td><span class="g">市价</span></td><td>2022-09-05 12:06:17</td><td>无</td></tr>
</tbody>
</table>
<div class="hscroll"><i class="al"></i><i class="thumb"></i><i class="ar"></i></div>
</div>
<div class="fixed-col"><table class="tbl"><thead><tr><th>操作</th></tr></thead><tbody><tr><td><a class="ab ab-e"><svg class="ic " width="11" height="11" viewBox="0 0 12 12" style="" aria-hidden="true"><path fill="currentColor" fill-rule="evenodd" d="M9 .3c.4-.4 1-.4 1.400 0l1.300 1.300c.4.4.4 1 0 1.400L10.500 4.200L7.800 1.500zM7.100 2.200l2.700 2.700L3.200 11.500H.5V8.800zM1.600 9.400v1h1l.7-.7L2.300 8.700z"/></svg></a><a class="ab ab-d"><svg class="ic " width="10" height="11" viewBox="0 0 11 12.5" style="" aria-hidden="true"><path fill="currentColor" fill-rule="evenodd" d="M3.600 0h3.800l.8 1.500H11v1.200H0V1.500h2.800zM.8 3.300h9.400v7.900c0 .7-.6 1.300-1.300 1.300H2.100c-.7 0-1.300-.6-1.300-1.300zM2.900 5v5.600h1V5zM5 5v5.600h1V5zM7.100 5v5.600h1V5z"/></svg></a></td></tr><tr><td><a class="ab ab-e"><svg class="ic " width="11" height="11" viewBox="0 0 12 12" style="" aria-hidden="true"><path fill="currentColor" fill-rule="evenodd" d="M9 .3c.4-.4 1-.4 1.400 0l1.300 1.300c.4.4.4 1 0 1.400L10.500 4.200L7.800 1.500zM7.100 2.200l2.700 2.700L3.200 11.500H.5V8.800zM1.600 9.400v1h1l.7-.7L2.300 8.700z"/></svg></a><a class="ab ab-d"><svg class="ic " width="10" height="11" viewBox="0 0 11 12.5" style="" aria-hidden="true"><path fill="currentColor" fill-rule="evenodd" d="M3.600 0h3.800l.8 1.500H11v1.200H0V1.500h2.800zM.8 3.300h9.400v7.900c0 .7-.6 1.300-1.300 1.300H2.100c-.7 0-1.300-.6-1.300-1.300zM2.900 5v5.600h1V5zM5 5v5.600h1V5zM7.100 5v5.600h1V5z"/></svg></a></td></tr><tr><td><a class="ab ab-e"><svg class="ic " width="11" height="11" viewBox="0 0 12 12" style="" aria-hidden="true"><path fill="currentColor" fill-rule="evenodd" d="M9 .3c.4-.4 1-.4 1.400 0l1.300 1.300c.4.4.4 1 0 1.400L10.500 4.200L7.800 1.500zM7.100 2.200l2.700 2.700L3.200 11.500H.5V8.800zM1.600 9.400v1h1l.7-.7L2.300 8.700z"/></svg></a><a class="ab ab-d"><svg class="ic " width="10" height="11" viewBox="0 0 11 12.5" style="" aria-hidden="true"><path fill="currentColor" fill-rule="evenodd" d="M3.600 0h3.800l.8 1.500H11v1.200H0V1.500h2.800zM.8 3.300h9.400v7.900c0 .7-.6 1.300-1.300 1.300H2.100c-.7 0-1.300-.6-1.300-1.300zM2.900 5v5.600h1V5zM5 5v5.600h1V5zM7.100 5v5.600h1V5z"/></svg></a></td></tr><tr><td><a class="ab ab-e"><svg class="ic " width="11" height="11" viewBox="0 0 12 12" style="" aria-hidden="true"><path fill="currentColor" fill-rule="evenodd" d="M9 .3c.4-.4 1-.4 1.400 0l1.300 1.300c.4.4.4 1 0 1.400L10.500 4.200L7.800 1.500zM7.100 2.200l2.700 2.700L3.200 11.500H.5V8.800zM1.600 9.400v1h1l.7-.7L2.300 8.700z"/></svg></a><a class="ab ab-d"><svg class="ic " width="10" height="11" viewBox="0 0 11 12.5" style="" aria-hidden="true"><path fill="currentColor" fill-rule="evenodd" d="M3.600 0h3.800l.8 1.500H11v1.200H0V1.500h2.800zM.8 3.300h9.400v7.900c0 .7-.6 1.300-1.300 1.300H2.100c-.7 0-1.300-.6-1.300-1.300zM2.900 5v5.600h1V5zM5 5v5.600h1V5zM7.100 5v5.600h1V5z"/></svg></a></td></tr><tr><td><a class="ab ab-e"><svg class="ic " width="11" height="11" viewBox="0 0 12 12" style="" aria-hidden="true"><path fill="currentColor" fill-rule="evenodd" d="M9 .3c.4-.4 1-.4 1.400 0l1.300 1.300c.4.4.4 1 0 1.400L10.500 4.200L7.800 1.500zM7.100 2.200l2.700 2.700L3.200 11.500H.5V8.800zM1.600 9.400v1h1l.7-.7L2.300 8.700z"/></svg></a><a class="ab ab-d"><svg class="ic " width="10" height="11" viewBox="0 0 11 12.5" style="" aria-hidden="true"><path fill="currentColor" fill-rule="evenodd" d="M3.600 0h3.800l.8 1.500H11v1.200H0V1.500h2.800zM.8 3.300h9.400v7.900c0 .7-.6 1.300-1.300 1.300H2.100c-.7 0-1.300-.6-1.300-1.300zM2.900 5v5.600h1V5zM5 5v5.600h1V5zM7.100 5v5.600h1V5z"/></svg></a></td></tr><tr><td><a class="ab ab-e"><svg class="ic " width="11" height="11" viewBox="0 0 12 12" style="" aria-hidden="true"><path fill="currentColor" fill-rule="evenodd" d="M9 .3c.4-.4 1-.4 1.400 0l1.300 1.300c.4.4.4 1 0 1.400L10.500 4.200L7.800 1.500zM7.100 2.200l2.700 2.700L3.200 11.500H.5V8.800zM1.600 9.400v1h1l.7-.7L2.300 8.700z"/></svg></a><a class="ab ab-d"><svg class="ic " width="10" height="11" viewBox="0 0 11 12.5" style="" aria-hidden="true"><path fill="currentColor" fill-rule="evenodd" d="M3.600 0h3.800l.8 1.500H11v1.200H0V1.500h2.800zM.8 3.300h9.400v7.900c0 .7-.6 1.300-1.300 1.300H2.100c-.7 0-1.300-.6-1.300-1.300zM2.900 5v5.600h1V5zM5 5v5.600h1V5zM7.100 5v5.600h1V5z"/></svg></a></td></tr><tr><td><a class="ab ab-e"><svg class="ic " width="11" height="11" viewBox="0 0 12 12" style="" aria-hidden="true"><path fill="currentColor" fill-rule="evenodd" d="M9 .3c.4-.4 1-.4 1.400 0l1.300 1.300c.4.4.4 1 0 1.400L10.500 4.200L7.800 1.500zM7.100 2.200l2.700 2.700L3.200 11.500H.5V8.800zM1.600 9.400v1h1l.7-.7L2.300 8.700z"/></svg></a><a class="ab ab-d"><svg class="ic " width="10" height="11" viewBox="0 0 11 12.5" style="" aria-hidden="true"><path fill="currentColor" fill-rule="evenodd" d="M3.600 0h3.800l.8 1.500H11v1.200H0V1.500h2.800zM.8 3.300h9.400v7.900c0 .7-.6 1.300-1.300 1.300H2.100c-.7 0-1.300-.6-1.300-1.300zM2.900 5v5.600h1V5zM5 5v5.600h1V5zM7.100 5v5.600h1V5z"/></svg></a></td></tr><tr><td><a class="ab ab-e"><svg class="ic " width="11" height="11" viewBox="0 0 12 12" style="" aria-hidden="true"><path fill="currentColor" fill-rule="evenodd" d="M9 .3c.4-.4 1-.4 1.400 0l1.300 1.300c.4.4.4 1 0 1.400L10.500 4.200L7.800 1.500zM7.100 2.200l2.700 2.700L3.200 11.500H.5V8.800zM1.600 9.400v1h1l.7-.7L2.300 8.700z"/></svg></a><a class="ab ab-d"><svg class="ic " width="10" height="11" viewBox="0 0 11 12.5" style="" aria-hidden="true"><path fill="currentColor" fill-rule="evenodd" d="M3.600 0h3.800l.8 1.500H11v1.200H0V1.500h2.800zM.8 3.300h9.400v7.900c0 .7-.6 1.300-1.300 1.300H2.100c-.7 0-1.300-.6-1.300-1.300zM2.900 5v5.600h1V5zM5 5v5.600h1V5zM7.100 5v5.600h1V5z"/></svg></a></td></tr><tr><td><a class="ab ab-e"><svg class="ic " width="11" height="11" viewBox="0 0 12 12" style="" aria-hidden="true"><path fill="currentColor" fill-rule="evenodd" d="M9 .3c.4-.4 1-.4 1.400 0l1.300 1.300c.4.4.4 1 0 1.400L10.500 4.200L7.800 1.500zM7.100 2.200l2.700 2.700L3.200 11.500H.5V8.800zM1.600 9.400v1h1l.7-.7L2.300 8.700z"/></svg></a><a class="ab ab-d"><svg class="ic " width="10" height="11" viewBox="0 0 11 12.5" style="" aria-hidden="true"><path fill="currentColor" fill-rule="evenodd" d="M3.600 0h3.800l.8 1.500H11v1.200H0V1.500h2.800zM.8 3.300h9.400v7.900c0 .7-.6 1.300-1.300 1.300H2.100c-.7 0-1.300-.6-1.300-1.300zM2.900 5v5.600h1V5zM5 5v5.600h1V5zM7.100 5v5.600h1V5z"/></svg></a></td></tr><tr><td><a class="ab ab-e"><svg class="ic " width="11" height="11" viewBox="0 0 12 12" style="" aria-hidden="true"><path fill="currentColor" fill-rule="evenodd" d="M9 .3c.4-.4 1-.4 1.400 0l1.300 1.300c.4.4.4 1 0 1.400L10.500 4.200L7.800 1.500zM7.100 2.200l2.700 2.700L3.200 11.500H.5V8.800zM1.600 9.400v1h1l.7-.7L2.300 8.700z"/></svg></a><a class="ab ab-d"><svg class="ic " width="10" height="11" viewBox="0 0 11 12.5" style="" aria-hidden="true"><path fill="currentColor" fill-rule="evenodd" d="M3.600 0h3.800l.8 1.500H11v1.200H0V1.500h2.800zM.8 3.300h9.400v7.900c0 .7-.6 1.300-1.300 1.300H2.100c-.7 0-1.300-.6-1.300-1.300zM2.900 5v5.600h1V5zM5 5v5.600h1V5zM7.100 5v5.600h1V5z"/></svg></a></td></tr></tbody></table></div>
<div class="pg-left"><span class="pinfo">显示第 1 到第 10 条记录，总共 71 条记录</span> <span class="plist">每页显示 <a class="btn btn-default psize"><span>10</span><i class="caret"><svg class="ic " width="8" height="4" viewBox="0 0 8 4" style="" aria-hidden="true"><path fill="currentColor" d="M0 4h8L4 0z"/></svg></i></a> 条记录</span></div>
<div class="pg-right"><ul class="pagination"><li class="" style="width:67px"><a>上一页</a></li><li class="active" style="width:33px"><a>1</a></li><li class="" style="width:33px"><a>2</a></li><li class="" style="width:33px"><a>3</a></li><li class="" style="width:33px"><a>4</a></li><li class="" style="width:33px"><a>5</a></li><li class="dots" style="width:36px"><a>...</a></li><li class="" style="width:33px"><a>8</a></li><li class="" style="width:67px"><a>下一页</a></li></ul><span class="jump-in"></span><a class="btn btn-default jump-btn">跳转</a></div>
</div>
</div>
</section>
<div class="ws-tip"><span>WebSocket 链接已断开</span><i class="tri"></i></div>
<div class="chat-btn"><svg width="50" height="50" viewBox="0 0 50 50" aria-hidden="true"><circle cx="25" cy="25" r="25" fill="#1688fe"/><path fill="#fff" d="M25.500 9.500c8.700 0 15.500 6.900 15.500 15.500s-6.900 15.500-15.500 15.500c-2.700 0-5.200-.700-7.400-1.900c-1.300-.7-2.300-.400-3.800-.100l-3.500.700c-.600.100-1-.400-.800-1l1-3.300c.400-1.300.400-2-.200-3.300C10.400 29.600 10 27.400 10 25C10 16.400 16.900 9.500 25.500 9.500z"/><path fill="#74b6ff" d="M31 10.500A13 13 0 0 0 40.800 27.200A15.500 15.500 0 0 0 31 10.500z"/></svg></div>
</body>
</html>
